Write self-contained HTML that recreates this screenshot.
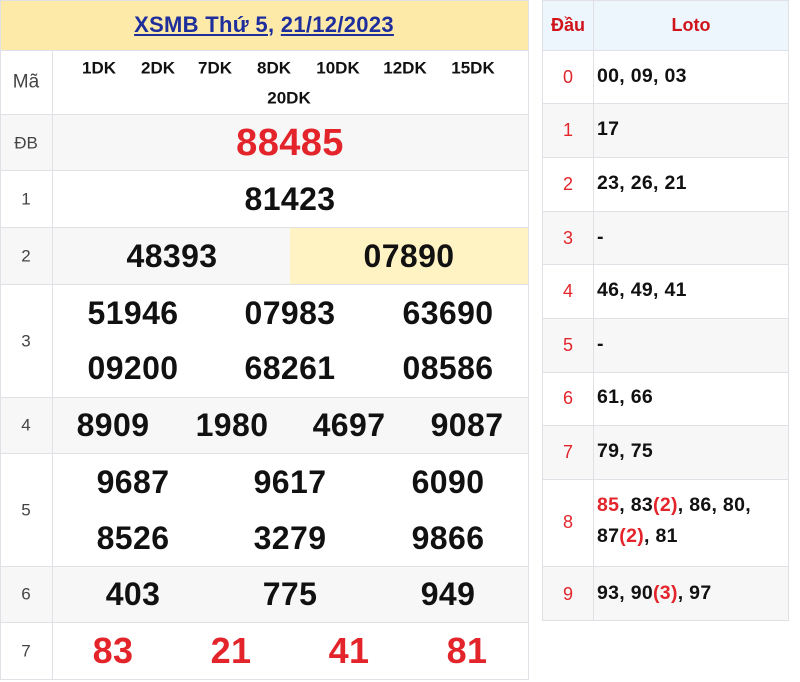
<!DOCTYPE html>
<html><head><meta charset="utf-8"><style>
*{margin:0;padding:0;box-sizing:border-box}
body{width:800px;height:682px;background:#fff;position:relative;overflow:hidden;font-family:"Liberation Sans",Arial,sans-serif}
.r{position:absolute;border:1px solid #e0e0e6}
.t{position:absolute;transform:translate(-50%,-50%);white-space:nowrap;line-height:1}
.n{font-weight:bold;font-size:32px;color:#111;letter-spacing:0.4px}
.rd{color:#e3242b}
.l{font-size:17px;color:#444}
.dk{font-weight:bold;font-size:17px;color:#111}
.lo{position:absolute;left:597px;font-weight:bold;font-size:19.5px;color:#111;line-height:31px;letter-spacing:0.3px}
.h{font-size:18px;color:#e3242b}
</style></head><body>
<div class="r" style="left:0;top:0;width:529px;height:51px;background:#fdeaa8"></div>
<div class="t" style="left:264px;top:25px;font-weight:bold;font-size:22px;color:#1e2e9c;letter-spacing:0.3px"><u>XSMB Thứ 5</u>, <u>21/12/2023</u></div>
<div class="r" style="left:0;top:50px;width:53px;height:65px;background:#fff"></div>
<div class="r" style="left:52px;top:50px;width:477px;height:65px;background:#fff"></div>
<div class="r" style="left:0;top:114px;width:53px;height:57px;background:#f7f7f7"></div>
<div class="r" style="left:52px;top:114px;width:477px;height:57px;background:#f7f7f7"></div>
<div class="r" style="left:0;top:170px;width:53px;height:58px"></div>
<div class="r" style="left:52px;top:170px;width:477px;height:58px"></div>
<div class="r" style="left:0;top:227px;width:53px;height:58px;background:#f7f7f7"></div>
<div class="r" style="left:52px;top:227px;width:239px;height:58px;background:#f7f7f7;border-right:none"></div>
<div class="r" style="left:290px;top:227px;width:239px;height:58px;background:#fff3c4;border-left:none"></div>
<div class="r" style="left:0;top:284px;width:53px;height:114px"></div>
<div class="r" style="left:52px;top:284px;width:477px;height:114px"></div>
<div class="r" style="left:0;top:397px;width:53px;height:57px;background:#f7f7f7"></div>
<div class="r" style="left:52px;top:397px;width:477px;height:57px;background:#f7f7f7"></div>
<div class="r" style="left:0;top:453px;width:53px;height:114px"></div>
<div class="r" style="left:52px;top:453px;width:477px;height:114px"></div>
<div class="r" style="left:0;top:566px;width:53px;height:57px;background:#f7f7f7"></div>
<div class="r" style="left:52px;top:566px;width:477px;height:57px;background:#f7f7f7"></div>
<div class="r" style="left:0;top:622px;width:53px;height:58px"></div>
<div class="r" style="left:52px;top:622px;width:477px;height:58px"></div>

<div class="t l" style="left:26px;top:82px;font-size:19px">Mã</div>
<div class="t dk" style="left:99px;top:68px">1DK</div>
<div class="t dk" style="left:158px;top:68px">2DK</div>
<div class="t dk" style="left:215px;top:68px">7DK</div>
<div class="t dk" style="left:274px;top:68px">8DK</div>
<div class="t dk" style="left:338px;top:68px">10DK</div>
<div class="t dk" style="left:405px;top:68px">12DK</div>
<div class="t dk" style="left:473px;top:68px">15DK</div>
<div class="t dk" style="left:289px;top:98px">20DK</div>
<div class="t l" style="left:26px;top:143px">ĐB</div>
<div class="t n rd" style="left:290px;top:143px;font-size:38px">88485</div>
<div class="t l" style="left:26px;top:199px">1</div>
<div class="t n" style="left:290px;top:199px">81423</div>
<div class="t l" style="left:26px;top:256px">2</div>
<div class="t n" style="left:172px;top:256px">48393</div>
<div class="t n" style="left:409px;top:256px">07890</div>
<div class="t l" style="left:26px;top:341px">3</div>
<div class="t n" style="left:133px;top:313px">51946</div>
<div class="t n" style="left:290px;top:313px">07983</div>
<div class="t n" style="left:448px;top:313px">63690</div>
<div class="t n" style="left:133px;top:368px">09200</div>
<div class="t n" style="left:290px;top:368px">68261</div>
<div class="t n" style="left:448px;top:368px">08586</div>
<div class="t l" style="left:26px;top:425px">4</div>
<div class="t n" style="left:113px;top:425px">8909</div>
<div class="t n" style="left:232px;top:425px">1980</div>
<div class="t n" style="left:349px;top:425px">4697</div>
<div class="t n" style="left:467px;top:425px">9087</div>
<div class="t l" style="left:26px;top:510px">5</div>
<div class="t n" style="left:133px;top:482px">9687</div>
<div class="t n" style="left:290px;top:482px">9617</div>
<div class="t n" style="left:448px;top:482px">6090</div>
<div class="t n" style="left:133px;top:538px">8526</div>
<div class="t n" style="left:290px;top:538px">3279</div>
<div class="t n" style="left:448px;top:538px">9866</div>
<div class="t l" style="left:26px;top:594px">6</div>
<div class="t n" style="left:133px;top:594px">403</div>
<div class="t n" style="left:290px;top:594px">775</div>
<div class="t n" style="left:448px;top:594px">949</div>
<div class="t l" style="left:26px;top:651px">7</div>
<div class="t n rd" style="left:113px;top:651px;font-size:36px">83</div>
<div class="t n rd" style="left:231px;top:651px;font-size:36px">21</div>
<div class="t n rd" style="left:349px;top:651px;font-size:36px">41</div>
<div class="t n rd" style="left:467px;top:651px;font-size:36px">81</div>

<div class="r" style="left:542px;top:0;width:52px;height:51px;background:#eef6fd"></div>
<div class="r" style="left:593px;top:0;width:196px;height:51px;background:#eef6fd"></div>
<div class="t" style="left:568px;top:25px;font-weight:bold;font-size:18px;color:#d0141c">Đầu</div>
<div class="t" style="left:691px;top:25px;font-weight:bold;font-size:18px;color:#d0141c">Loto</div>

<div class="r" style="left:542px;top:50px;width:52px;height:54px"></div><div class="r" style="left:593px;top:50px;width:196px;height:54px"></div>
<div class="r" style="left:542px;top:103px;width:52px;height:55px;background:#f7f7f7"></div><div class="r" style="left:593px;top:103px;width:196px;height:55px;background:#f7f7f7"></div>
<div class="r" style="left:542px;top:157px;width:52px;height:55px"></div><div class="r" style="left:593px;top:157px;width:196px;height:55px"></div>
<div class="r" style="left:542px;top:211px;width:52px;height:54px;background:#f7f7f7"></div><div class="r" style="left:593px;top:211px;width:196px;height:54px;background:#f7f7f7"></div>
<div class="r" style="left:542px;top:264px;width:52px;height:55px"></div><div class="r" style="left:593px;top:264px;width:196px;height:55px"></div>
<div class="r" style="left:542px;top:318px;width:52px;height:55px;background:#f7f7f7"></div><div class="r" style="left:593px;top:318px;width:196px;height:55px;background:#f7f7f7"></div>
<div class="r" style="left:542px;top:372px;width:52px;height:54px"></div><div class="r" style="left:593px;top:372px;width:196px;height:54px"></div>
<div class="r" style="left:542px;top:425px;width:52px;height:55px;background:#f7f7f7"></div><div class="r" style="left:593px;top:425px;width:196px;height:55px;background:#f7f7f7"></div>
<div class="r" style="left:542px;top:479px;width:52px;height:88px"></div><div class="r" style="left:593px;top:479px;width:196px;height:88px"></div>
<div class="r" style="left:542px;top:566px;width:52px;height:55px;background:#f7f7f7"></div><div class="r" style="left:593px;top:566px;width:196px;height:55px;background:#f7f7f7"></div>

<div class="t h" style="left:568px;top:77px">0</div><div class="lo" style="top:61px">00, 09, 03</div>
<div class="t h" style="left:568px;top:130px">1</div><div class="lo" style="top:114px">17</div>
<div class="t h" style="left:568px;top:184px">2</div><div class="lo" style="top:168px">23, 26, 21</div>
<div class="t h" style="left:568px;top:238px">3</div><div class="lo" style="top:222px">-</div>
<div class="t h" style="left:568px;top:291px">4</div><div class="lo" style="top:275px">46, 49, 41</div>
<div class="t h" style="left:568px;top:345px">5</div><div class="lo" style="top:329px">-</div>
<div class="t h" style="left:568px;top:398px">6</div><div class="lo" style="top:382px">61, 66</div>
<div class="t h" style="left:568px;top:452px">7</div><div class="lo" style="top:436px">79, 75</div>
<div class="t h" style="left:568px;top:522px">8</div><div class="lo" style="top:490px;width:185px"><span class="rd">85</span>, 83<span class="rd">(2)</span>, 86, 80, 87<span class="rd">(2)</span>, 81</div>
<div class="t h" style="left:568px;top:594px">9</div><div class="lo" style="top:578px">93, 90<span class="rd">(3)</span>, 97</div>
</body></html>
